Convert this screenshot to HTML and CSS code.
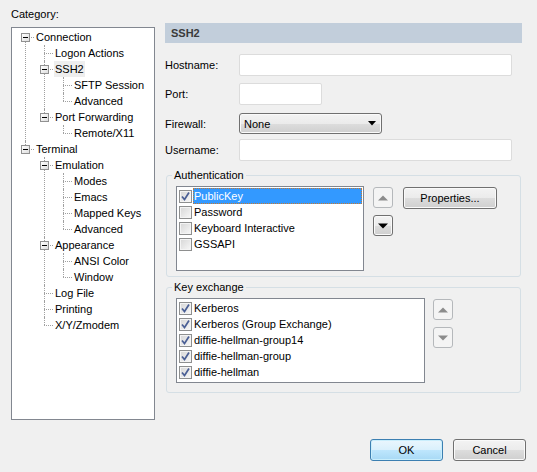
FILE: index.html
```html
<!DOCTYPE html>
<html lang="en">

<head>
  <meta charset="UTF-8">
  <title>Session Options</title>
  <link rel="stylesheet" href="styles.css">
</head>

<body>
  <div class="dialog">
    <div class="main">
      <div class="category">
        <div class="caption">Category:</div>
        <div class="tree-box">
          <ul class="tree">
            <li>
              <span class="toggle"></span>
              <span class="label">Connection</span>
              <ul>
                <li><span class="label">Logon Actions</span></li>
                <li>
                  <span class="toggle"></span>
                  <span class="label selected">SSH2</span>
                  <ul>
                    <li><span class="label">SFTP Session</span></li>
                    <li><span class="label">Advanced</span></li>
                  </ul>
                </li>
                <li>
                  <span class="toggle"></span>
                  <span class="label">Port Forwarding</span>
                  <ul>
                    <li><span class="label">Remote/X11</span></li>
                  </ul>
                </li>
              </ul>
            </li>
            <li>
              <span class="toggle"></span>
              <span class="label">Terminal</span>
              <ul>
                <li>
                  <span class="toggle"></span>
                  <span class="label">Emulation</span>
                  <ul>
                    <li><span class="label">Modes</span></li>
                    <li><span class="label">Emacs</span></li>
                    <li><span class="label">Mapped Keys</span></li>
                    <li><span class="label">Advanced</span></li>
                  </ul>
                </li>
                <li>
                  <span class="toggle"></span>
                  <span class="label">Appearance</span>
                  <ul>
                    <li><span class="label">ANSI Color</span></li>
                    <li><span class="label">Window</span></li>
                  </ul>
                </li>
                <li><span class="label">Log File</span></li>
                <li><span class="label">Printing</span></li>
                <li><span class="label">X/Y/Zmodem</span></li>
              </ul>
            </li>
          </ul>
        </div>
      </div>

      <div class="page">
        <div class="page-title">SSH2</div>

        <div class="form">
          <label>Hostname:</label>
          <input class="field wide" type="text">
          <label>Port:</label>
          <input class="field port" type="text">
          <label>Firewall:</label>
          <div class="combo">
            <span>None</span>
            <svg width="8" height="5" viewBox="0 0 8 5"><path d="M0 0h8L4 4.5z" fill="#000"/></svg>
          </div>
          <label>Username:</label>
          <input class="field wide" type="text">
        </div>

        <fieldset class="group auth">
          <legend>Authentication</legend>
          <div class="group-body">
            <div class="listbox auth-list">
              <div class="item">
                <span class="check on"></span><span class="text active">PublicKey</span>
              </div>
              <div class="item"><span class="check"></span><span class="text">Password</span></div>
              <div class="item"><span class="check"></span><span class="text">Keyboard Interactive</span></div>
              <div class="item"><span class="check"></span><span class="text">GSSAPI</span></div>
            </div>
            <div class="arrows">
              <div class="arrow-btn disabled">
                <svg width="10" height="6" viewBox="0 0 10 6"><path d="M5 0.5L10 5.5H0z"/></svg>
              </div>
              <div class="arrow-btn">
                <svg width="10" height="6" viewBox="0 0 10 6"><path d="M0 0.5h10L5 5.5z"/></svg>
              </div>
            </div>
            <button class="btn props">Properties...</button>
          </div>
        </fieldset>

        <fieldset class="group kex">
          <legend>Key exchange</legend>
          <div class="group-body">
            <div class="listbox kex-list">
              <div class="item"><span class="check on"></span><span class="text">Kerberos</span></div>
              <div class="item"><span class="check on"></span><span class="text">Kerberos (Group Exchange)</span></div>
              <div class="item"><span class="check on"></span><span class="text">diffie-hellman-group14</span></div>
              <div class="item"><span class="check on"></span><span class="text">diffie-hellman-group</span></div>
              <div class="item"><span class="check on"></span><span class="text">diffie-hellman</span></div>
            </div>
            <div class="arrows">
              <div class="arrow-btn disabled">
                <svg width="10" height="6" viewBox="0 0 10 6"><path d="M5 0.5L10 5.5H0z"/></svg>
              </div>
              <div class="arrow-btn disabled">
                <svg width="10" height="6" viewBox="0 0 10 6"><path d="M0 0.5h10L5 5.5z"/></svg>
              </div>
            </div>
          </div>
        </fieldset>
      </div>
    </div>

    <div class="footer">
      <button class="btn default">OK</button>
      <button class="btn">Cancel</button>
    </div>
  </div>
</body>

</html>
```

FILE: styles.css
```css
html,
body {
  margin: 0;
  background: #f0f0f0;
}

body {
  font-family: "Liberation Sans", Arial, sans-serif;
  font-size: 11px;
  color: #000;
}

.dialog {
  width: 537px;
  height: 472px;
  display: flex;
  flex-direction: column;
  box-sizing: border-box;
}

.main {
  display: flex;
  gap: 10px;
  padding: 6px 15px 0 11px;
}

/* left: category tree */

.category {
  width: 144px;
}

.caption {
  height: 16px;
  line-height: 16px;
  margin-bottom: 5px;
}

.tree-box {
  height: 393px;
  box-sizing: border-box;
  border: 1px solid #828790;
  background: #fff;
}

.tree,
.tree ul {
  list-style: none;
  margin: 0;
  padding: 0;
}

.tree {
  padding: 1px 0 0 9px;
}

.tree ul {
  margin-left: 19px;
}

.tree li {
  position: relative;
}

.tree li::before {
  content: "";
  position: absolute;
  left: 4px;
  top: 8px;
  width: 9px;
  border-top: 1px dotted #a0a0a0;
}

.tree li::after {
  content: "";
  position: absolute;
  left: 4px;
  top: 0;
  bottom: 0;
  border-left: 1px dotted #a0a0a0;
}

.tree > li:first-child::after {
  top: 8px;
}

.tree li:last-child::after {
  bottom: auto;
  height: 8px;
}

.tree .toggle {
  position: absolute;
  left: 0;
  top: 4px;
  z-index: 1;
  width: 9px;
  height: 9px;
  box-sizing: border-box;
  border: 1px solid #919191;
  background: linear-gradient(135deg, #ffffff, #dedede);
}

.tree .toggle::after {
  content: "";
  position: absolute;
  left: 1px;
  top: 3px;
  width: 5px;
  height: 1px;
  background: #000;
}

.tree .label {
  display: block;
  width: fit-content;
  height: 16px;
  line-height: 16px;
  margin-left: 14px;
  padding: 0 1px;
  white-space: nowrap;
}

.tree .label.selected {
  background: #eeeeee;
}

/* right: property page */

.page {
  flex: 1;
  padding-top: 17px;
}

.page-title {
  height: 20px;
  line-height: 20px;
  padding-left: 6px;
  background: #c2cedb;
  color: #3a3a3a;
  font-weight: bold;
}

.form {
  display: grid;
  grid-template-columns: 74px auto;
  grid-template-rows: 29px 30px 26px 22px;
  align-items: start;
  margin-top: 11px;
}

.form label {
  line-height: 22px;
}

.field {
  display: block;
  height: 22px;
  box-sizing: border-box;
  border: 1px solid #dcdcdc;
  border-radius: 2px;
  background: #fff;
  outline: none;
  padding: 0 3px;
  font: inherit;
}

.field.wide {
  width: 273px;
}

.field.port {
  width: 83px;
}

.combo {
  width: 143px;
  height: 21px;
  box-sizing: border-box;
  display: flex;
  align-items: center;
  justify-content: space-between;
  padding: 0 5px 0 4px;
  border: 1px solid #707070;
  border-radius: 3px;
  background: linear-gradient(#f3f3f3, #ebebeb 50%, #dddddd 51%, #cfcfcf);
  box-shadow: inset 0 0 0 1px #fafafa;
}

.group {
  margin: 6px 1px 0;
  padding: 3px 0 5px 9px;
  border: 1px solid #d5dfe5;
  border-radius: 3px;
  min-width: 0;
}

.group legend {
  margin-left: -4px;
  padding: 0 2px;
  line-height: 16px;
}

.group.kex {
  margin-top: 2px;
  padding-bottom: 9px;
}

.group-body {
  display: flex;
  align-items: flex-start;
}

.listbox {
  height: 85px;
  box-sizing: border-box;
  border: 1px solid #828790;
  background: #fff;
  padding: 1px 1px 1px 2px;
}

.auth-list {
  width: 188px;
}

.kex-list {
  width: 249px;
}

.item {
  display: flex;
  align-items: center;
  height: 16px;
}

.check {
  width: 13px;
  height: 13px;
  box-sizing: border-box;
  border: 1px solid #8e8f8f;
  background: linear-gradient(135deg, #d6d6d6, #f8f8f8);
  box-shadow: inset 0 0 0 1px #f4f4f4;
}

.check.on {
  background: url("data:image/svg+xml,%3Csvg xmlns='http://www.w3.org/2000/svg' width='11' height='11'%3E%3Cpath d='M2 5.5L4.5 8.5L9 1.5' fill='none' stroke='%234a5f95' stroke-width='1.7'/%3E%3C/svg%3E") no-repeat center, linear-gradient(135deg, #d6d6d6, #f8f8f8);
}

.item .text {
  flex: 1;
  height: 16px;
  line-height: 16px;
  margin-left: 1px;
  padding: 0 1px;
  white-space: nowrap;
}

.item .text.active {
  background: #3399ff;
  color: #fff;
  outline: 1px dotted #c87a30;
  outline-offset: -1px;
}

.arrows {
  display: flex;
  flex-direction: column;
  gap: 7px;
  margin: 1px 0 0 9px;
}

.kex .arrows {
  margin-left: 8px;
}

.arrow-btn {
  width: 20px;
  height: 21px;
  box-sizing: border-box;
  display: flex;
  align-items: center;
  justify-content: center;
  border: 1px solid #707070;
  border-radius: 3px;
  background: linear-gradient(#f3f3f3, #ebebeb 50%, #dddddd 51%, #cfcfcf);
  box-shadow: inset 0 0 0 1px #fafafa;
  fill: #000;
}

.arrow-btn.disabled {
  border-color: #b5b8bb;
  background: #f4f4f4;
  box-shadow: none;
  fill: #8c8c8c;
}

.btn {
  height: 22px;
  box-sizing: border-box;
  border: 1px solid #707070;
  border-radius: 3px;
  background: linear-gradient(#f3f3f3, #ebebeb 50%, #dddddd 51%, #cfcfcf);
  box-shadow: inset 0 0 0 1px #fafafa;
  font: inherit;
  color: #000;
  padding: 0;
}

.btn.props {
  width: 94px;
  margin: 1px 0 0 10px;
}

.btn.default {
  border-color: #3c7fb1;
  background: linear-gradient(#eaf6fd, #d9f0fc 50%, #bee6fd 51%, #a7d9f5);
  box-shadow: inset 0 0 0 1px #c9eefc;
}

.footer {
  margin-top: auto;
  display: flex;
  justify-content: flex-end;
  gap: 10px;
  padding: 0 11px 11px;
}

.footer .btn {
  width: 73px;
}
```
